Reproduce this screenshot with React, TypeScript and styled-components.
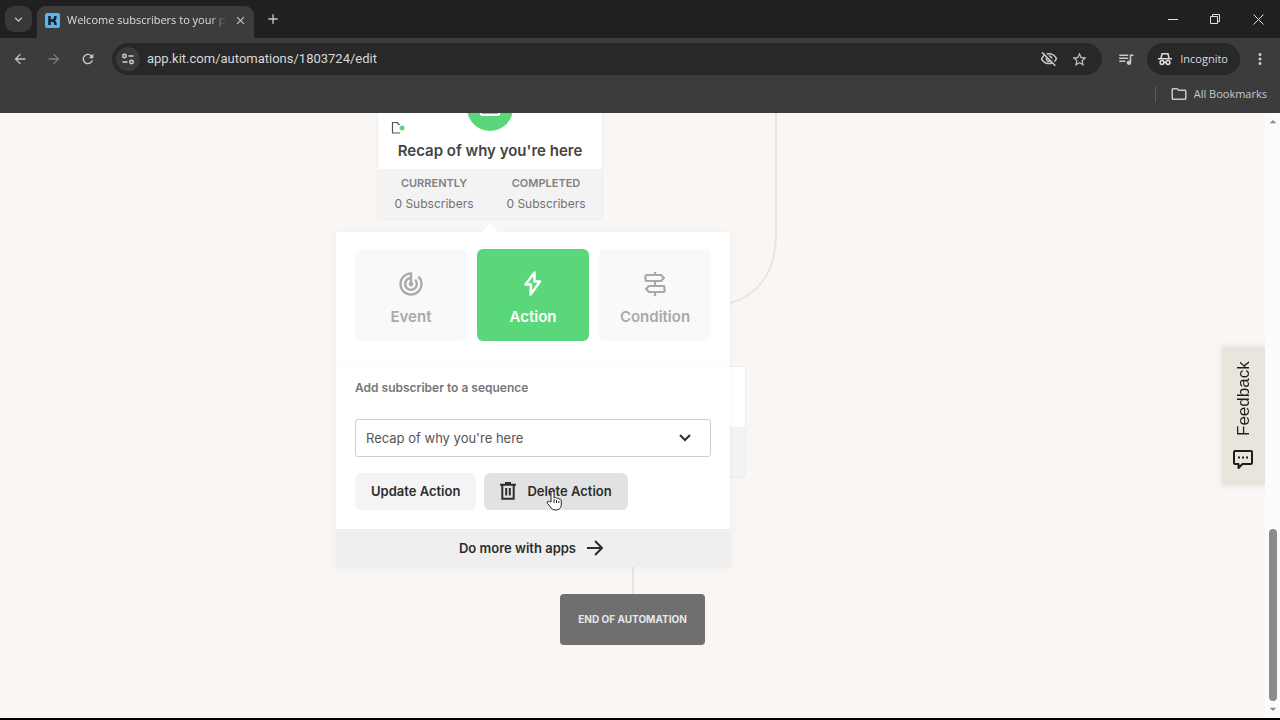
import React from "react";
import styled, { createGlobalStyle, css } from "styled-components";
import {
  MdArrowBack,
  MdArrowForward,
  MdRefresh,
  MdOutlineVisibilityOff,
  MdStarOutline,
  MdQueueMusic,
  MdMoreVert,
  MdOutlineFolder,
  MdTrackChanges,
  MdArrowDropDown,
  MdArrowDropUp,
  MdAdd,
  MdClose,
  MdExpandMore,
} from "react-icons/md";

const ui = `"Open Sans", "Noto Sans", sans-serif`;
const page = `Inter, "Liberation Sans", sans-serif`;

const GlobalStyle = createGlobalStyle`
  * { box-sizing: border-box; }
  html, body, #root { height: 100%; }
  body { margin: 0; background: #000; font-family: ${page}; color: #2f2f2f; }
  button { font: inherit; color: inherit; border: 0; padding: 0; background: none; cursor: pointer; }
  h2, h3, p, dl, dt, dd { margin: 0; }
  svg { display: block; flex: none; }
`;

const Window = styled.div`
  display: flex;
  flex-direction: column;
  min-height: 100vh;
  border-bottom: 2px solid #000;
`;

const Chrome = styled.header`
  background: #3c3c3c;
  color: #c8c8c8;
  font-family: ${ui};
`;

const TabStrip = styled.div`
  display: flex;
  align-items: flex-end;
  height: 38px;
  padding-left: 5px;
  background: #202020;
`;

const TabSearch = styled.button`
  display: grid;
  place-items: center;
  align-self: center;
  width: 27px;
  height: 26px;
  border-radius: 9px;
  background: #383838;
`;

const Tab = styled.div`
  display: flex;
  align-items: center;
  gap: 7px;
  width: 217px;
  height: 32px;
  margin-left: 5px;
  padding: 0 8px 4px;
  border-radius: 9px 9px 0 0;
  background: #3c3c3c;
  color: #dedede;
`;

const Favicon = styled.svg`
  width: 15px;
  height: 15px;
`;

const TabTitle = styled.span`
  flex: 1;
  white-space: nowrap;
  font-size: 11px;
  line-height: 16px;
  mask-image: linear-gradient(to right, #000 90%, transparent);
`;

const IconButton = styled.button<{ $dim?: boolean; $size?: number }>`
  display: grid;
  place-items: center;
  width: ${(p) => p.$size ?? 28}px;
  height: ${(p) => p.$size ?? 28}px;
  flex: none;
  color: ${(p) => (p.$dim ? "#7c7c7c" : "#c8c8c8")};
`;

const NewTab = styled(IconButton)`
  align-self: center;
  margin-left: 5px;
`;

const WindowControls = styled.div`
  display: flex;
  align-self: stretch;
  margin-left: auto;
`;

const WindowControl = styled.button`
  display: grid;
  place-items: center;
  width: 43px;
  color: #e0e0e0;
`;

const Toolbar = styled.div`
  display: flex;
  align-items: center;
  height: 42px;
  padding: 0 6px;
`;

const NavButtons = styled.div`
  display: flex;
  gap: 6px;
  margin-right: 10px;
`;

const AddressBar = styled.div`
  display: flex;
  flex: 1;
  align-items: center;
  height: 32px;
  padding: 0 8px 0 4px;
  border-radius: 16px;
  background: #282828;
`;

const SiteInfo = styled.button`
  display: grid;
  place-items: center;
  width: 24px;
  height: 24px;
  border-radius: 12px;
  background: #3a3a3a;
  color: #d0d0d0;
`;

const Url = styled.input`
  flex: 1;
  min-width: 0;
  margin: 0 0 0 7px;
  padding: 0;
  border: 0;
  outline: 0;
  background: none;
  color: #d8d8d8;
  font: 13px/20px Roboto, ${ui};
`;

const Media = styled(IconButton)`
  margin: 0 7px 0 10px;
`;

const Incognito = styled.button`
  display: flex;
  align-items: center;
  gap: 8px;
  height: 32px;
  margin-right: 6px;
  padding: 0 12px 0 11px;
  border-radius: 16px;
  background: #282828;
  color: #dcdcdc;
  font-size: 11px;
  line-height: 16px;
`;

const Bookmarks = styled.div`
  display: flex;
  align-items: center;
  justify-content: flex-end;
  height: 33px;
  padding: 0 13px 6px 0;
`;

const AllBookmarks = styled.button`
  display: flex;
  align-items: center;
  gap: 6px;
  height: 16px;
  padding-left: 14px;
  border-left: 1px solid #5c5c5c;
  font-size: 11px;
  line-height: 16px;
`;

const Viewport = styled.div`
  display: flex;
  flex: 1;
  background: #f9f6f4;
`;

const Canvas = styled.main`
  position: relative;
  flex: 1;
  min-height: 605px;
  overflow: hidden;
`;

const Connector = styled.svg`
  position: absolute;
  left: 600px;
  top: 0;
  width: 180px;
  height: 490px;
  fill: none;
  stroke: #e8e5e4;
  stroke-width: 2;
`;

const Node = styled.article<{ $x: number; $y: number }>`
  position: absolute;
  left: ${(p) => p.$x}px;
  top: ${(p) => p.$y}px;
  width: 226px;
  background: #fff;
  border: 1px solid #efedec;
  border-radius: 4px;
  overflow: hidden;
  text-align: center;
`;

const NodeBody = styled.div<{ $height: number }>`
  position: relative;
  display: flex;
  flex-direction: column;
  justify-content: flex-end;
  height: ${(p) => p.$height}px;
  padding-bottom: 6px;
`;

const NodeBadge = styled.span`
  position: absolute;
  left: 89px;
  top: 1px;
  display: grid;
  place-items: center;
  width: 46px;
  height: 46px;
  border-radius: 50%;
  background: #5bd77b;
  color: #fff;
`;

const NodeStatus = styled.svg`
  position: absolute;
  left: 13px;
  top: 37px;
  width: 16px;
  height: 14px;
`;

const NodeTitle = styled.h2`
  font-size: 15px;
  line-height: 24px;
  font-weight: 600;
  color: #444;
`;

const NodeStats = styled.dl`
  display: grid;
  grid-template-columns: 1fr 1fr;
  height: 50px;
  padding-top: 4px;
  background: #f4f3f3;
  color: #717171;
`;

const StatLabel = styled.dt`
  font-size: 11px;
  line-height: 20px;
  font-weight: 600;
  color: #808080;
`;

const StatValue = styled.dd`
  font-size: 12px;
  line-height: 22px;
`;

const EndNode = styled.div`
  position: absolute;
  left: 560px;
  top: 481px;
  width: 145px;
  border-radius: 4px;
  background: #6f6f6f;
  color: #e6e6e6;
  font-size: 10px;
  line-height: 51px;
  font-weight: 700;
  text-align: center;
`;

const Popover = styled.section`
  position: absolute;
  left: 336px;
  top: 119px;
  width: 394px;
  background: #fff;
  box-shadow: 0 1px 6px rgba(60, 50, 50, 0.06);

  &::before {
    content: "";
    position: absolute;
    left: 146px;
    top: -8px;
    border: 8px solid transparent;
    border-top: 0;
    border-bottom-color: #fff;
  }
`;

const StepTypes = styled.div`
  display: grid;
  grid-template-columns: repeat(3, 1fr);
  gap: 10px;
  height: 130px;
  padding: 17px 19px 20px;
  border-bottom: 1px solid #fafafa;
`;

const StepType = styled.button<{ $active?: boolean }>`
  display: flex;
  flex-direction: column;
  align-items: center;
  gap: 8px;
  padding-top: 21px;
  border-radius: 6px;
  background: #f9f9f9;
  color: #a9a9a9;
  font-size: 15px;
  line-height: 22px;
  font-weight: 600;
  ${(p) =>
    p.$active &&
    css`
      background: #5bd77b;
      color: #fff;
    `}
`;

const ActionForm = styled.form`
  padding: 16px 19px 19px;
`;

const FieldLabel = styled.label`
  display: block;
  margin-bottom: 21px;
  color: #777;
  font-size: 12px;
  line-height: 20px;
  font-weight: 600;
`;

const SelectWrap = styled.div`
  display: grid;
  align-items: center;

  > * { grid-area: 1 / 1; }
  > svg { justify-self: end; margin-right: 19px; pointer-events: none; }
`;

const Select = styled.select`
  appearance: none;
  width: 100%;
  height: 38px;
  padding: 0 40px 0 10px;
  border: 1px solid #cfcfcf;
  border-radius: 3px;
  background: #fff;
  color: #555;
  font: 13px/20px ${page};
`;

const FormActions = styled.div`
  display: flex;
  gap: 8px;
  margin-top: 16px;
`;

const FormButton = styled.button<{ $hover?: boolean }>`
  display: flex;
  align-items: center;
  gap: 11px;
  height: 37px;
  padding: 0 16px 1px;
  border-radius: 6px;
  background: ${(p) => (p.$hover ? "#e3e2e2" : "#f4f4f4")};
  color: #2d2d2d;
  font-size: 13px;
  line-height: 20px;
  font-weight: 600;
`;

const MoreApps = styled.a`
  display: flex;
  align-items: center;
  justify-content: center;
  gap: 11px;
  height: 38px;
  padding-right: 4px;
  background: #f0efef;
  color: #2d2d2d;
  font-size: 13px;
  line-height: 20px;
  font-weight: 600;
  text-decoration: none;
`;

const Pointer = styled.svg`
  position: absolute;
  left: 545px;
  top: 376px;
  width: 18px;
  height: 23px;
`;

const Feedback = styled.button`
  position: absolute;
  right: 0;
  top: 234px;
  display: flex;
  align-items: center;
  gap: 13px;
  width: 43px;
  height: 138px;
  padding-top: 16px;
  writing-mode: vertical-rl;
  transform: rotate(180deg);
  background: #eae5dc;
  color: #1d1d1d;
  box-shadow: 0 0 6px rgba(90, 80, 70, 0.15);
  font: 17px/20px "Liberation Sans", sans-serif;

  svg { transform: rotate(180deg); }
`;

const Scrollbar = styled.div`
  display: flex;
  flex-direction: column;
  align-items: center;
  justify-content: space-between;
  width: 15px;
  padding: 1px 0;
  background: #fcfbfb;
  color: #8a8a8a;
`;

const Thumb = styled.div`
  width: 8px;
  height: 172px;
  margin: auto 0 0;
  border-radius: 4px;
  background: #8b8b8b;
`;

const SiteIcon = () => (
  <svg width="14" height="14" viewBox="0 0 14 14" fill="none" stroke="currentColor" strokeWidth="1.5">
    <circle cx="3.5" cy="4" r="1.7" />
    <path d="M7.500 4h5M1.500 10h5" />
    <circle cx="10.500" cy="10" r="1.7" />
  </svg>
);

const IncognitoIcon = () => (
  <svg width="14" height="14" viewBox="0 0 14 14" fill="none" stroke="currentColor" strokeWidth="1.5">
    <path d="M0 6.8h14M3 6.5l1-4.7h6l1 4.7" />
    <circle cx="4" cy="10.5" r="1.9" />
    <circle cx="10" cy="10.5" r="1.9" />
    <path d="M6 10.3h2" />
  </svg>
);

const BoltIcon = () => (
  <svg width="28" height="28" viewBox="0 0 28 28" fill="none" stroke="currentColor" strokeWidth="2.5" strokeLinejoin="round">
    <path d="M15.500 2.500 6.500 14.500h5.500L11.500 24.500l9.500-13H15.500z" />
  </svg>
);

const SignpostIcon = () => (
  <svg width="28" height="28" viewBox="0 0 28 28" fill="none" stroke="currentColor" strokeWidth="2.2" strokeLinejoin="round">
    <path d="M14 2v3M14 11v5M14 22v4M5.500 5h14.500l3 3-3 3H5.500q-1 0-1-1V6q0-1 1-1zM22.500 16H8l-3 3 3 3h14.500q1 0 1-1v-4q0-1-1-1z" />
  </svg>
);

const TrashIcon = () => (
  <svg width="16" height="18" viewBox="0 0 16 18" fill="none" stroke="currentColor" strokeWidth="2">
    <path d="M0 2.7h16M5 1h6M2.3 3v13.8h11.4V3M6.2 6v7.5M9.8 6v7.5" />
  </svg>
);

const CommentIcon = () => (
  <svg width="20" height="20" viewBox="0 0 20 20" fill="none" stroke="currentColor" strokeWidth="2" strokeLinejoin="round">
    <path d="M2 2h16q1 0 1 1v11q0 1-1 1H9.500L5.500 19v-4H2q-1 0-1-1V3q0-1 1-1z" />
    <path d="M5 8.500h2M9 8.500h2M13 8.500h2" />
  </svg>
);

export default function App() {
  return (
    <Window>
      <GlobalStyle />
      <Chrome>
        <TabStrip>
          <TabSearch aria-label="Search tabs"><MdExpandMore size={15} /></TabSearch>
          <Tab>
            <Favicon viewBox="0 0 15 15">
              <rect width="15" height="15" rx="2" fill="#5db4ea" />
              <path d="M4.5 3v9M5.5 7.5h1.5c2 0 3.4-1.8 3.4-4.5M7 7.5c2 0 3.4 1.8 3.6 4.5" stroke="#10202c" strokeWidth="2.5" fill="none" />
            </Favicon>
            <TabTitle>Welcome subscribers to your p</TabTitle>
            <IconButton $size={15} aria-label="Close tab"><MdClose size={13} /></IconButton>
          </Tab>
          <NewTab aria-label="New tab"><MdAdd size={16} /></NewTab>
          <WindowControls>
            <WindowControl aria-label="Minimize">
              <svg width="10" height="10" stroke="currentColor"><path d="M0 5.5h10" /></svg>
            </WindowControl>
            <WindowControl aria-label="Restore">
              <svg width="11" height="11" fill="none" stroke="currentColor"><path d="M.5 2.5h7v7h-7zM2.5 2.5v-2h7v7h-2" /></svg>
            </WindowControl>
            <WindowControl aria-label="Close">
              <svg width="11" height="11" stroke="currentColor"><path d="M.5.5l10 10M10.500.5l-10 10" /></svg>
            </WindowControl>
          </WindowControls>
        </TabStrip>
        <Toolbar>
          <NavButtons>
            <IconButton aria-label="Back"><MdArrowBack size={16} /></IconButton>
            <IconButton $dim aria-label="Forward"><MdArrowForward size={16} /></IconButton>
            <IconButton aria-label="Reload"><MdRefresh size={16} /></IconButton>
          </NavButtons>
          <AddressBar>
            <SiteInfo aria-label="Site information"><SiteIcon /></SiteInfo>
            <Url aria-label="Address" defaultValue="app.kit.com/automations/1803724/edit" />
            <IconButton $size={30} aria-label="Tracking protection"><MdOutlineVisibilityOff size={18} /></IconButton>
            <IconButton $size={30} aria-label="Bookmark this page"><MdStarOutline size={17} /></IconButton>
          </AddressBar>
          <Media aria-label="Media controls"><MdQueueMusic size={18} /></Media>
          <Incognito><IncognitoIcon />Incognito</Incognito>
          <IconButton aria-label="Menu"><MdMoreVert size={18} /></IconButton>
        </Toolbar>
        <Bookmarks>
          <AllBookmarks><MdOutlineFolder size={18} />All Bookmarks</AllBookmarks>
        </Bookmarks>
      </Chrome>
      <Viewport>
        <Canvas>
          <Connector viewBox="0 0 180 490">
            <path d="M176 0V124Q174 178 128 191M33 440V482" />
          </Connector>
          <Node $x={520} $y={253}>
            <NodeBody $height={60} />
            <NodeStats />
          </Node>
          <Node $x={377} $y={-30}>
            <NodeBody $height={85}>
              <NodeBadge>
                <svg width="20" height="16" viewBox="0 0 20 16" fill="none" stroke="currentColor" strokeWidth="2">
                  <rect x="1" y="1" width="18" height="14" rx="1" />
                  <path d="M5 11h10M7 7l3 3 3-3" />
                </svg>
              </NodeBadge>
              <NodeStatus viewBox="0 0 16 14">
                <path d="M6 1.500H1.500v10.500H9M5.500 1l3 3" fill="none" stroke="#555" strokeWidth="1.2" />
                <circle cx="11" cy="7" r="2.500" fill="#5bd77b" />
              </NodeStatus>
              <NodeTitle>Recap of why you're here</NodeTitle>
            </NodeBody>
            <NodeStats>
              <div><StatLabel>CURRENTLY</StatLabel><StatValue>0 Subscribers</StatValue></div>
              <div><StatLabel>COMPLETED</StatLabel><StatValue>0 Subscribers</StatValue></div>
            </NodeStats>
          </Node>
          <EndNode>END OF AUTOMATION</EndNode>
          <Popover>
            <StepTypes>
              <StepType><MdTrackChanges size={28} />Event</StepType>
              <StepType $active><BoltIcon />Action</StepType>
              <StepType><SignpostIcon />Condition</StepType>
            </StepTypes>
            <ActionForm onSubmit={(e) => e.preventDefault()}>
              <FieldLabel htmlFor="sequence">Add subscriber to a sequence</FieldLabel>
              <SelectWrap>
                <Select id="sequence"><option>Recap of why you're here</option></Select>
                <svg width="14" height="10" fill="none" stroke="#2d2d2d" strokeWidth="2"><path d="M2 2l5 5 5-5" /></svg>
              </SelectWrap>
              <FormActions>
                <FormButton type="submit">Update Action</FormButton>
                <FormButton type="button" $hover><TrashIcon />Delete Action</FormButton>
              </FormActions>
            </ActionForm>
            <MoreApps href="#apps">
              Do more with apps
              <svg width="16" height="16" fill="none" stroke="currentColor" strokeWidth="2"><path d="M0 8h14M8 1l7 7-7 7" /></svg>
            </MoreApps>
          </Popover>
          <Pointer viewBox="0 0 18 23">
            <path d="M6 13V3.500a1.500 1.500 0 0 1 3 0V9c1-1 2.300-.6 2.600.4 1-.6 2.200-.2 2.400.8 1.200-.4 2.300.2 2.300 1.500V15c0 4-2.300 6-5.600 6-3 0-4.200-1.200-5.600-3.600L2.200 14c-.6-1.300 1-2.300 2-1.400z" fill="#fff" stroke="#222" />
            <path d="M9 10v4M11.500 11v3M13.800 12v2" stroke="#222" />
          </Pointer>
          <Feedback><CommentIcon />Feedback</Feedback>
        </Canvas>
        <Scrollbar aria-hidden="true">
          <MdArrowDropUp size={16} />
          <Thumb />
          <MdArrowDropDown size={16} />
        </Scrollbar>
      </Viewport>
    </Window>
  );
}
